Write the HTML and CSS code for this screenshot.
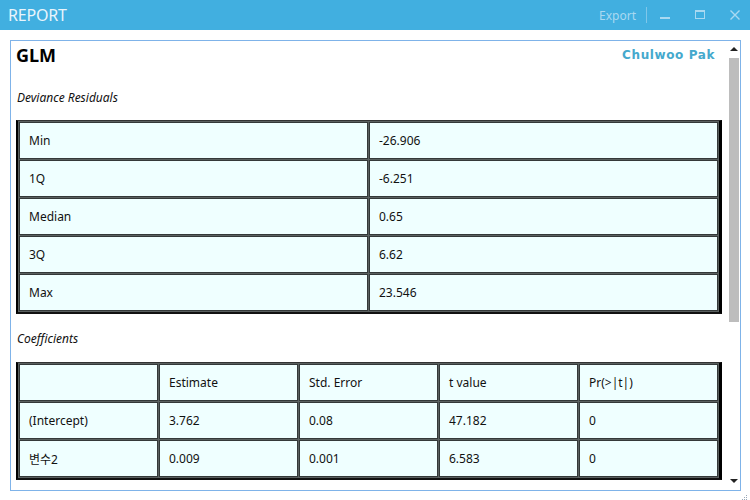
FILE: index.html
```html
<!DOCTYPE html>
<html>
<head>
<meta charset="utf-8">
<link rel="stylesheet" href="styles.css">
</head>
<body>
<div class="titlebar">
  <div class="title">REPORT</div>
  <div class="controls">
    <span class="export">Export</span>
    <span class="sep"></span>
    <svg class="ico" width="12" height="12" viewBox="0 0 12 12"><rect x="1" y="8" width="10" height="2" fill="#a9d9f1"/></svg>
    <svg class="ico" width="12" height="12" viewBox="0 0 12 12"><rect x="1.5" y="1.5" width="9" height="8" fill="none" stroke="#a9d9f1" stroke-width="1"/><rect x="1" y="1" width="10" height="2" fill="#a9d9f1"/></svg>
    <svg class="ico" width="12" height="12" viewBox="0 0 12 12"><path d="M1.5 1.5 L10.5 10.5 M10.5 1.5 L1.5 10.5" stroke="#a9d9f1" stroke-width="1.4"/></svg>
  </div>
</div>
<div class="main">
  <div class="panel">
    <div class="content">
      <div class="header">
        <span class="glm">GLM</span>
        <span class="author">Chulwoo Pak</span>
      </div>
      <div class="label first">Deviance Residuals</div>
      <table class="grid">
        <tr><td>Min</td><td>-26.906</td></tr>
        <tr><td>1Q</td><td>-6.251</td></tr>
        <tr><td>Median</td><td>0.65</td></tr>
        <tr><td>3Q</td><td>6.62</td></tr>
        <tr><td>Max</td><td>23.546</td></tr>
      </table>
      <div class="label second">Coefficients</div>
      <table class="grid">
        <tr><td></td><td>Estimate</td><td>Std. Error</td><td>t value</td><td>Pr(&gt;|t|)</td></tr>
        <tr><td>(Intercept)</td><td>3.762</td><td>0.08</td><td>47.182</td><td>0</td></tr>
        <tr><td>변수2</td><td>0.009</td><td>0.001</td><td>6.583</td><td>0</td></tr>
      </table>
    </div>
    <div class="scrollbar">
      <div class="arrow up"></div>
      <div class="track"><div class="thumb"></div></div>
      <div class="arrow down"></div>
    </div>
  </div>
  <div class="grip">
    <svg width="10" height="10" viewBox="0 0 10 10" fill="#9aa8b8"><rect x="8" y="2" width="1" height="1"/><rect x="6" y="4" width="1" height="1"/><rect x="8" y="4" width="1" height="1"/><rect x="4" y="6" width="1" height="1"/><rect x="6" y="6" width="1" height="1"/><rect x="8" y="6" width="1" height="1"/><rect x="2" y="8" width="1" height="1"/><rect x="4" y="8" width="1" height="1"/><rect x="6" y="8" width="1" height="1"/><rect x="8" y="8" width="1" height="1"/></svg>
  </div>
</div>
</body>
</html>
```
FILE: styles.css
```css
html, body {
  margin: 0;
  padding: 0;
  background: #ffffff;
  width: 750px;
  height: 500px;
  overflow: hidden;
  font-family: "Noto Sans", "Noto Sans CJK KR", sans-serif;
}
.titlebar {
  height: 30px;
  background: #41afe0;
  display: flex;
  align-items: center;
  justify-content: space-between;
}
.title {
  color: #e9f5fc;
  font-size: 16px;
  padding-left: 8px;
  letter-spacing: -0.2px;
}
.controls {
  display: flex;
  align-items: center;
  padding-right: 9px;
}
.export {
  color: #a9d9f1;
  font-size: 12px;
  margin-right: 10px;
}
.sep {
  width: 1px;
  height: 16px;
  background: #7fc7ea;
  margin-right: 12px;
}
.ico {
  margin-right: 23px;
}
.ico:last-child {
  margin-right: 0;
}
.main {
  position: relative;
  padding: 10px 0 0 10px;
}
.panel {
  width: 729px;
  height: 449px;
  border: 1px solid #7fb3e9;
  display: flex;
}
.content {
  flex: 1;
  padding: 0 5px;
  overflow: hidden;
}
.header {
  display: flex;
  justify-content: space-between;
  align-items: center;
  height: 24px;
  padding-top: 2px;
}
.glm {
  font-size: 18px;
  font-weight: bold;
  color: #000;
}
.author {
  font-family: "DejaVu Sans", sans-serif;
  font-weight: bold;
  font-size: 12px;
  letter-spacing: 0.6px;
  color: #45a9cd;
  margin-right: 8px;
}
.label {
  font-style: italic;
  font-size: 12px;
  line-height: 20px;
  margin: 15px 0 13px 1px;
  color: #111;
}
.label.first {
  margin-top: 21px;
  margin-bottom: 12px;
}
.grid {
  width: 706px;
  table-layout: fixed;
  border-collapse: separate;
  border-spacing: 1px;
  background: #5a605f;
  border-left: 2px solid #000;
  border-right: 3px solid #000;
  border-top: 1px solid #333;
  border-bottom: 2px solid #111;
}
.grid td {
  background: #efffff;
  border: 1px solid #343939;
  height: 35px;
  padding: 0 9px;
  font-size: 12px;
  color: #111;
  vertical-align: middle;
}
.scrollbar {
  width: 12px;
  display: flex;
  flex-direction: column;
  align-items: center;
}
.arrow {
  width: 0;
  height: 0;
  border-left: 4px solid transparent;
  border-right: 4px solid transparent;
}
.arrow.up {
  border-bottom: 4px solid #222;
  margin-top: 6px;
}
.arrow.down {
  border-top: 4px solid #222;
  margin-bottom: 7px;
}
.track {
  flex: 1;
  width: 10px;
  padding-top: 7px;
}
.thumb {
  width: 10px;
  height: 264px;
  background: #bdbdbd;
}
.grip {
  position: absolute;
  left: 738px;
  top: 456px;
}
```
